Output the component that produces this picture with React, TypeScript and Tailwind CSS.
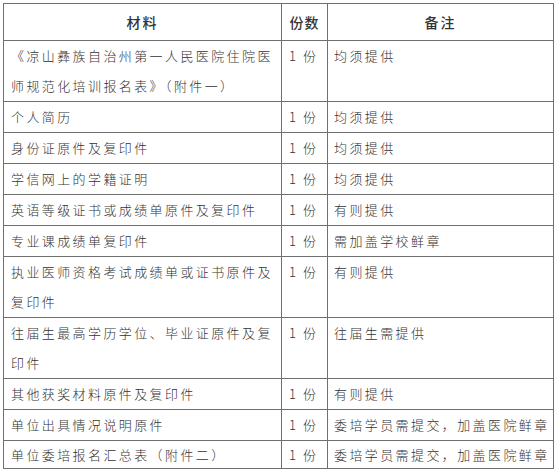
const FONT = '"SimSun", "Noto Sans CJK SC", "Liberation Sans", sans-serif';

type Row = { name: string[]; note: string; last?: boolean };

const rows: Row[] = [
  {
    name: ['《凉山彝族自治州第一人民医院住院医', '师规范化培训报名表》（附件一）'],
    note: '均须提供',
  },
  { name: ['个人简历'], note: '均须提供' },
  { name: ['身份证原件及复印件'], note: '均须提供' },
  { name: ['学信网上的学籍证明'], note: '均须提供' },
  { name: ['英语等级证书或成绩单原件及复印件'], note: '有则提供' },
  { name: ['专业课成绩单复印件'], note: '需加盖学校鲜章' },
  { name: ['执业医师资格考试成绩单或证书原件及', '复印件'], note: '有则提供' },
  { name: ['往届生最高学历学位、毕业证原件及复', '印件'], note: '往届生需提供' },
  { name: ['其他获奖材料原件及复印件'], note: '有则提供' },
  { name: ['单位出具情况说明原件'], note: '委培学员需提交，加盖医院鲜章' },
  { name: ['单位委培报名汇总表（附件二）'], note: '委培学员需提交，加盖医院鲜章', last: true },
];

export default function App() {
  return (
    <div className="w-[557px] h-[473px] bg-white overflow-hidden pt-[3px] pl-[3px]">
      <table
        className="border-collapse w-[550px] table-fixed text-[#333] text-[13px] font-light"
        style={{ fontFamily: FONT }}
      >
        <colgroup>
          <col className="w-[278px]" />
          <col className="w-[46px]" />
          <col className="w-[226px]" />
        </colgroup>
        <thead>
          <tr className="h-[37px]">
            <th className="border border-[#707070] font-medium text-[14px] text-center tracking-[2px] p-0">
              材料
            </th>
            <th className="border border-[#707070] font-medium text-[14px] text-center tracking-[1px] p-0">
              份数
            </th>
            <th className="border border-[#707070] font-medium text-[14px] text-center tracking-[2px] p-0">
              备注
            </th>
          </tr>
        </thead>
        <tbody>
          {rows.map((r, i) => {
            const lh = r.last ? 'leading-[27px]' : 'leading-[30px]';
            return (
              <tr key={i}>
                <td
                  className={`border border-[#707070] align-top pl-[7px] pr-0 py-0 tracking-[2.4px] whitespace-nowrap ${lh}`}
                >
                  {r.name.map((line, j) => (
                    <div key={j}>{line}</div>
                  ))}
                </td>
                <td className={`border border-[#707070] align-top pl-[7px] py-0 whitespace-nowrap ${lh}`}>
                  1<span className="ml-[7px]">份</span>
                </td>
                <td
                  className={`border border-[#707070] align-top pl-[6px] py-0 tracking-[2.4px] whitespace-nowrap overflow-hidden ${lh}`}
                >
                  {r.note}
                </td>
              </tr>
            );
          })}
        </tbody>
      </table>
    </div>
  );
}
